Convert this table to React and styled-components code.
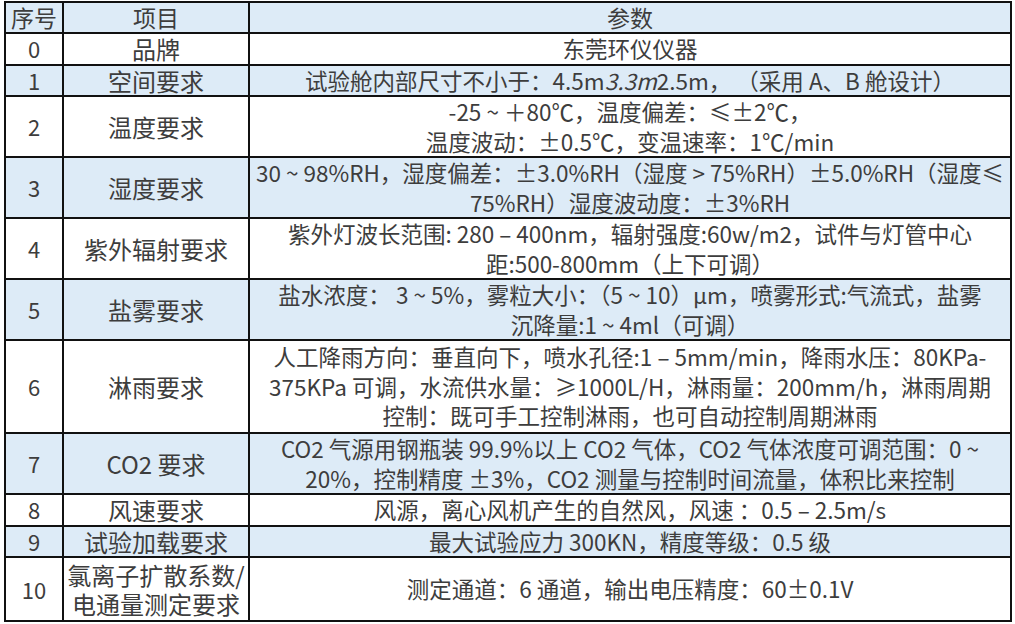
import styled, { createGlobalStyle } from "styled-components";

const GlobalStyle = createGlobalStyle`
  body {
    margin: 0;
    background: #ffffff;
    font-family: "Noto Sans CJK SC", "Noto Sans", sans-serif;
  }
`;

const rows = [
  { no: "0", item: ["品牌"], param: ["东莞环仪仪器"] },
  {
    no: "1",
    item: ["空间要求"],
    param: [
      <>
        试验舱内部尺寸不小于：4.5m<i>3.3m</i>2.5m，&nbsp;（采用 A、B 舱设计）
      </>,
    ],
  },
  {
    no: "2",
    item: ["温度要求"],
    param: ["-25 ~ ＋80℃，温度偏差：≤±2℃，", "温度波动：±0.5℃，变温速率：1℃/min"],
  },
  {
    no: "3",
    item: ["湿度要求"],
    param: [
      "30 ~ 98%RH，湿度偏差：±3.0%RH（湿度 > 75%RH）±5.0%RH（湿度≤",
      "75%RH）湿度波动度：±3%RH",
    ],
  },
  {
    no: "4",
    item: ["紫外辐射要求"],
    param: [
      "紫外灯波长范围: 280 – 400nm，辐射强度:60w/m2，试件与灯管中心",
      "距:500-800mm（上下可调）",
    ],
  },
  {
    no: "5",
    item: ["盐雾要求"],
    param: [
      "盐水浓度： 3 ~ 5%，雾粒大小：（5 ~ 10）μm，喷雾形式:气流式，盐雾",
      "沉降量:1 ~ 4ml（可调）",
    ],
  },
  {
    no: "6",
    item: ["淋雨要求"],
    param: [
      "人工降雨方向：垂直向下，喷水孔径:1 – 5mm/min，降雨水压：80KPa-",
      "375KPa 可调，水流供水量：≥1000L/H，淋雨量：200mm/h，淋雨周期",
      "控制：既可手工控制淋雨，也可自动控制周期淋雨",
    ],
  },
  {
    no: "7",
    item: ["CO2 要求"],
    param: [
      "CO2 气源用钢瓶装 99.9%以上 CO2 气体，CO2 气体浓度可调范围：0 ~",
      "20%，控制精度 ±3%，CO2 测量与控制时间流量，体积比来控制",
    ],
  },
  {
    no: "8",
    item: ["风速要求"],
    param: ["风源，离心风机产生的自然风，风速 ：0.5 – 2.5m/s"],
  },
  {
    no: "9",
    item: ["试验加载要求"],
    param: ["最大试验应力 300KN，精度等级：0.5 级"],
  },
  {
    no: "10",
    item: ["氯离子扩散系数/", "电通量测定要求"],
    param: ["测定通道：6 通道，输出电压精度：60±0.1V"],
    h: 64,
  },
];

function rowHeight(row) {
  if (row.h) return row.h;
  const lines = Math.max(row.item.length, row.param.length);
  if (lines === 1) return 31;
  return lines === 2 ? 61 : 93;
}

export default function App() {
  return (
    <>
      <GlobalStyle />
      <Sheet>
        <SpecTable>
          <colgroup>
            <col style={{ width: 58 }} />
            <col style={{ width: 186 }} />
            <col style={{ width: 762 }} />
          </colgroup>
          <thead>
            <Row $shaded $height={30}>
              <HeadCell>序号</HeadCell>
              <HeadCell>项目</HeadCell>
              <HeadCell>参数</HeadCell>
            </Row>
          </thead>
          <tbody>
            {rows.map((row, i) => (
              <Row key={row.no} $shaded={i % 2 === 1} $height={rowHeight(row)}>
                <NumCell>{row.no}</NumCell>
                <ItemCell>
                  {row.item.map((line, j) => (
                    <Line key={j}>{line}</Line>
                  ))}
                </ItemCell>
                <ParamCell>
                  {row.param.map((line, j) => (
                    <Line key={j}>{line}</Line>
                  ))}
                </ParamCell>
              </Row>
            ))}
          </tbody>
        </SpecTable>
      </Sheet>
    </>
  );
}

const Sheet = styled.div`
  padding: 1px 0 0 4px;
  width: 1015px;
  height: 624px;
  box-sizing: border-box;
  overflow: hidden;
`;

const SpecTable = styled.table`
  border-collapse: collapse;
  table-layout: fixed;
  width: 1006px;
  color: #3d3d3d;
  font-size: 23px;
`;

const Row = styled.tr`
  height: ${(p) => p.$height}px;
  background: ${(p) => (p.$shaded ? "#ddebf7" : "#ffffff")};
`;

const Cell = styled.td`
  border: 2px solid #111111;
  padding: 0;
  text-align: center;
  vertical-align: middle;
  line-height: 29px;
  white-space: nowrap;
  overflow: hidden;
`;

const HeadCell = styled(Cell).attrs({ as: "th" })`
  font-weight: 400;
`;

const NumCell = styled(Cell)`
  font-size: 22px;
`;

const ItemCell = styled(Cell)`
  font-size: 24px;
`;

const ParamCell = styled(Cell)`
  font-size: 22.5px;

  i {
    font-style: italic;
  }
`;

const Line = styled.div`
  height: 29.5px;
  line-height: 29.5px;
`;
